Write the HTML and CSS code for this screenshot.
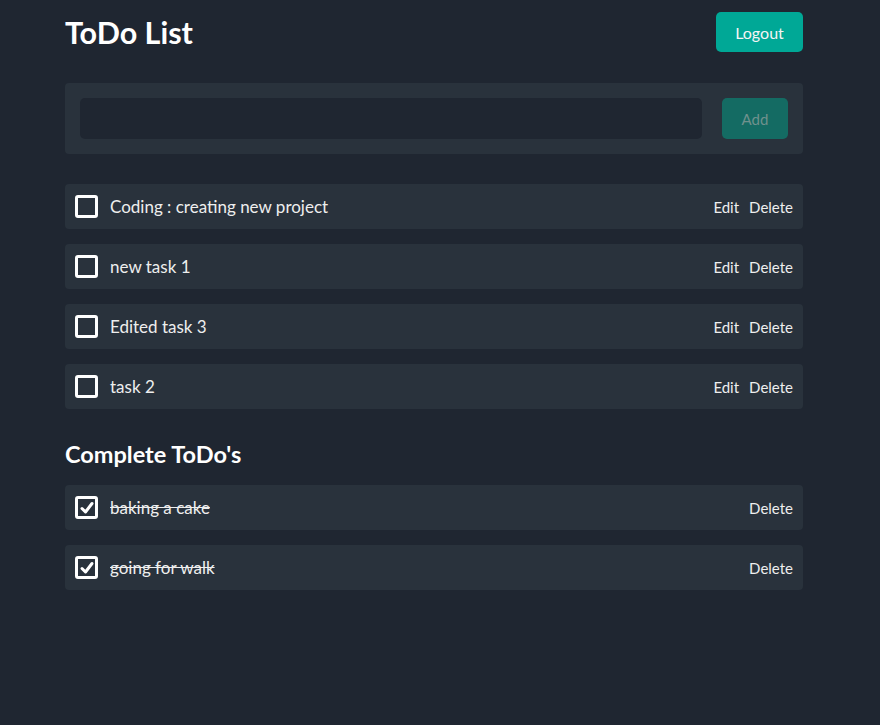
FILE: index.html
```html
<!DOCTYPE html>
<html>
<head>
<meta charset="utf-8">
<link rel="stylesheet" href="styles.css">
</head>
<body>
<div class="app">
  <header class="top">
    <h1 class="title">ToDo List</h1>
    <button class="logout">Logout</button>
  </header>
  <div class="add-panel">
    <input class="add-input" type="text">
    <button class="add-btn">Add</button>
  </div>
  <ul class="list">
    <li class="item"><span class="box"></span><span class="text">Coding : creating new project</span><span class="actions"><span>Edit</span><span>Delete</span></span></li>
    <li class="item"><span class="box"></span><span class="text">new task 1</span><span class="actions"><span>Edit</span><span>Delete</span></span></li>
    <li class="item"><span class="box"></span><span class="text">Edited task 3</span><span class="actions"><span>Edit</span><span>Delete</span></span></li>
    <li class="item"><span class="box"></span><span class="text">task 2</span><span class="actions"><span>Edit</span><span>Delete</span></span></li>
  </ul>
  <h2 class="subtitle">Complete ToDo's</h2>
  <ul class="list">
    <li class="item"><span class="box checked"><svg viewBox="0 0 16 16" width="16" height="16"><path d="M3 8.5 L6.5 12 L13 3.5" fill="none" stroke="#fff" stroke-width="3" stroke-linecap="round" stroke-linejoin="round"/></svg></span><span class="text done">baking a cake</span><span class="actions"><span>Delete</span></span></li>
    <li class="item"><span class="box checked"><svg viewBox="0 0 16 16" width="16" height="16"><path d="M3 8.5 L6.5 12 L13 3.5" fill="none" stroke="#fff" stroke-width="3" stroke-linecap="round" stroke-linejoin="round"/></svg></span><span class="text done">going for walk</span><span class="actions"><span>Delete</span></span></li>
  </ul>
</div>
</body>
</html>
```
FILE: styles.css
```css
html, body {
  margin: 0;
  padding: 0;
  background: #1f2631;
  color: #f2f2f2;
  font-family: "Lato", "Open Sans", sans-serif;
  height: 100%;
}
.app {
  width: 738px;
  margin: 0 0 0 65px;
  padding-top: 12px;
}
.top {
  display: flex;
  justify-content: space-between;
  align-items: center;
  height: 40px;
}
.title {
  margin: 0;
  font-size: 30.5px;
  font-weight: 700;
  color: #ffffff;
}
.logout {
  width: 87px;
  height: 40px;
  border: none;
  border-radius: 5px;
  background: #00a896;
  color: #f4f4f4;
  font-family: inherit;
  font-size: 16px;
}
.add-panel {
  margin-top: 31px;
  background: #29323c;
  border-radius: 4px;
  padding: 15px;
  display: flex;
  gap: 20px;
  align-items: center;
}
.add-input {
  flex: 1;
  height: 41px;
  box-sizing: border-box;
  border: none;
  border-radius: 5px;
  background: #1f2631;
  outline: none;
}
.add-btn {
  width: 66px;
  height: 41px;
  border: none;
  border-radius: 5px;
  background: #146b63;
  color: #6f918d;
  font-family: inherit;
  font-size: 15px;
}
.list {
  list-style: none;
  margin: 30px 0 0 0;
  padding: 0;
  display: flex;
  flex-direction: column;
  gap: 15px;
}
.item {
  height: 45px;
  background: #29323c;
  border-radius: 4px;
  display: flex;
  align-items: center;
  padding: 0 10px 0 10px;
}
.box {
  width: 23px;
  height: 23px;
  box-sizing: border-box;
  border: 3px solid #ffffff;
  border-radius: 3px;
  display: flex;
  align-items: center;
  justify-content: center;
  flex-shrink: 0;
}
.text {
  margin-left: 12px;
  flex: 1;
  font-size: 17px;
  color: #eeeeee;
}
.text.done {
  text-decoration: line-through;
}
.actions {
  display: flex;
  gap: 10px;
  font-size: 15px;
  color: #eeeeee;
}
.subtitle {
  margin: 32px 0 0 0;
  font-size: 23.5px;
  font-weight: 700;
  color: #ffffff;
  line-height: 26px;
}
.subtitle + .list {
  margin-top: 18px;
}
```
